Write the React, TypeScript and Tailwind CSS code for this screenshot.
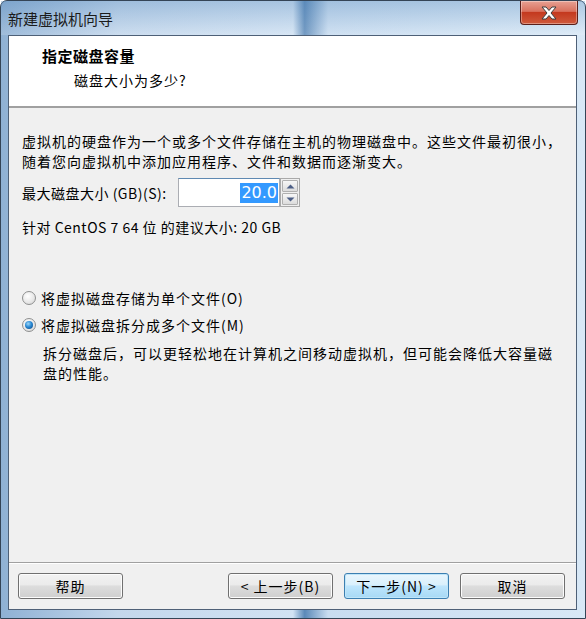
import React from 'react'

const FONT = { fontFamily: '"Noto Sans CJK SC", "Noto Sans", sans-serif' }

function WinButton ({ label, primary = false, className = '' }: { label: string, primary?: boolean, className?: string }) {
  return (
    <button
      className={
        'relative h-[26px] w-[105px] overflow-hidden rounded-[3px] border text-[14px] tracking-[1px] text-black ' +
        (primary
          ? 'border-[#3c7fb1] bg-[linear-gradient(#eaf6fd_0%,#d9f0fc_45%,#bee6fd_50%,#a7d9f5_100%)] shadow-[inset_0_0_0_1px_#c0e6f9] '
          : 'border-[#707070] bg-[linear-gradient(#f2f2f2_0%,#ebebeb_45%,#dddddd_50%,#cfcfcf_100%)] shadow-[inset_0_0_0_1px_#fcfcfc] ') +
        className
      }
    >
      {label}
    </button>
  )
}

function Radio ({ checked = false }: { checked?: boolean }) {
  return (
    <span className="flex h-[14px] w-[14px] shrink-0 items-center justify-center rounded-full border border-[#8e8f8f] bg-[radial-gradient(circle_at_40%_35%,#ffffff_0%,#e6e6e6_60%,#cfcfcf_100%)]">
      {checked && (
        <span className="h-[8px] w-[8px] rounded-full bg-[radial-gradient(circle_at_40%_35%,#9fd7f8_0%,#2a8ad4_45%,#0b3f7a_100%)]" />
      )}
    </span>
  )
}

export default function App () {
  return (
    <div className="h-[619px] w-[586px] overflow-hidden bg-white" style={FONT}>
      <div className="relative flex h-[619px] w-[586px] flex-col rounded-t-[7px] border border-[#344456] bg-[linear-gradient(90deg,#8fb1d4_0%,#c3d7ec_20%,#d1e2f3_50%,#5b89b8_52%,#c8dcf0_56%,#d8e8f6_100%)]">
        {/* title bar */}
        <div className="flex h-[34px] shrink-0 items-center bg-[linear-gradient(180deg,rgba(90,140,190,0.35)_0%,rgba(255,255,255,0.15)_100%)] pl-[7px]">
          <span className="text-[15px] leading-none text-[#1b1b1b]">新建虚拟机向导</span>
        </div>

        {/* close button */}
        <div className="absolute right-[7px] top-0 flex h-[24px] w-[58px] items-center justify-center rounded-b-[4px] border border-t-0 border-[#5a1f1a] bg-[linear-gradient(180deg,#e8a193_0%,#d9715e_45%,#c4391f_50%,#cf5a3c_100%)] shadow-[inset_0_0_0_1px_rgba(255,255,255,0.35)]">
          <svg width="20" height="14" viewBox="0 0 20 14">
            <path d="M3 1 L7 1 L10 4.5 L13 1 L17 1 L12 7 L17 13 L13 13 L10 9.5 L7 13 L3 13 L8 7 Z" fill="#ffffff" stroke="#3d3d3d" strokeWidth="1" strokeLinejoin="round" />
          </svg>
        </div>

        {/* client area */}
        <div className="mb-[8px] ml-[7px] mr-[8px] flex flex-1 flex-col border border-[#4e6077] bg-[#f0f0f0]">
          {/* header */}
          <div className="flex h-[72px] shrink-0 flex-col border-b-2 border-b-[#a0a0a0] bg-white">
            <div className="pl-[33px] pt-[11px] text-[15px] font-bold leading-[18px] tracking-[0.5px] text-black">指定磁盘容量</div>
            <div className="pl-[65px] pt-[6px] text-[14px] leading-[18px] tracking-[1px] text-black">磁盘大小为多少?</div>
          </div>

          {/* body */}
          <div className="flex flex-1 flex-col pl-[13px] pt-[23px] text-[14px] leading-[18px] tracking-[1px] text-black">
            <p className="whitespace-nowrap leading-[20px]">
              虚拟机的硬盘作为一个或多个文件存储在主机的物理磁盘中。这些文件最初很小，<br />
              随着您向虚拟机中添加应用程序、文件和数据而逐渐变大。
            </p>

            <div className="mt-[7px] flex h-[29px] items-center">
              <span className="w-[156px] whitespace-nowrap tracking-[0.5px]">最大磁盘大小 (GB)(S):</span>
              <div className="flex h-[29px] w-[102px] items-center justify-end border border-[#abadb3] border-t-[#5f89b2] bg-white pr-[1px]">
                <span className="bg-[#3399ff] px-[1px] text-[16px] leading-[20px] tracking-normal text-white" style={{ fontFamily: '"DejaVu Sans", sans-serif' }}>20.0</span>
              </div>
              <div className="flex h-[29px] w-[20px] flex-col gap-[1px] border border-[#a9a9a9] bg-[#f0f0f0] p-[1px]">
                <div className="flex flex-1 items-center justify-center rounded-[1px] border border-[#b0b0b0] bg-[linear-gradient(#f7f7f7,#dcdcdc)]">
                  <svg width="9" height="5" viewBox="0 0 9 5"><path d="M0.5 4.5 L4.5 0.5 L8.5 4.5 Z" fill="#4d5f86" /></svg>
                </div>
                <div className="flex flex-1 items-center justify-center rounded-[1px] border border-[#b0b0b0] bg-[linear-gradient(#f7f7f7,#dcdcdc)]">
                  <svg width="9" height="5" viewBox="0 0 9 5"><path d="M0.5 0.5 L4.5 4.5 L8.5 0.5 Z" fill="#4d5f86" /></svg>
                </div>
              </div>
            </div>

            <p className="mt-[11px] whitespace-nowrap tracking-[0.5px]">针对 CentOS 7 64 位 的建议大小: 20 GB</p>

            <div className="mt-[53px] flex h-[18px] items-center">
              <Radio />
              <span className="ml-[5px] whitespace-nowrap">将虚拟磁盘存储为单个文件(O)</span>
            </div>
            <div className="mt-[9px] flex h-[18px] items-center">
              <Radio checked />
              <span className="ml-[5px] whitespace-nowrap">将虚拟磁盘拆分成多个文件(M)</span>
            </div>
            <p className="mt-[9px] whitespace-nowrap pl-[21px] leading-[20px]">
              拆分磁盘后，可以更轻松地在计算机之间移动虚拟机，但可能会降低大容量磁<br />
              盘的性能。
            </p>
          </div>

          {/* footer */}
          <div className="flex h-[47px] shrink-0 items-start border-t border-t-[#a0a0a0] pl-[9px] pt-[10px] shadow-[inset_0_1px_0_#ffffff]">
            <WinButton label="帮助" />
            <WinButton label="< 上一步(B)" className="ml-[105px]" />
            <WinButton label="下一步(N) >" primary className="ml-[11px]" />
            <WinButton label="取消" className="ml-[11px]" />
          </div>
        </div>
      </div>
    </div>
  )
}
